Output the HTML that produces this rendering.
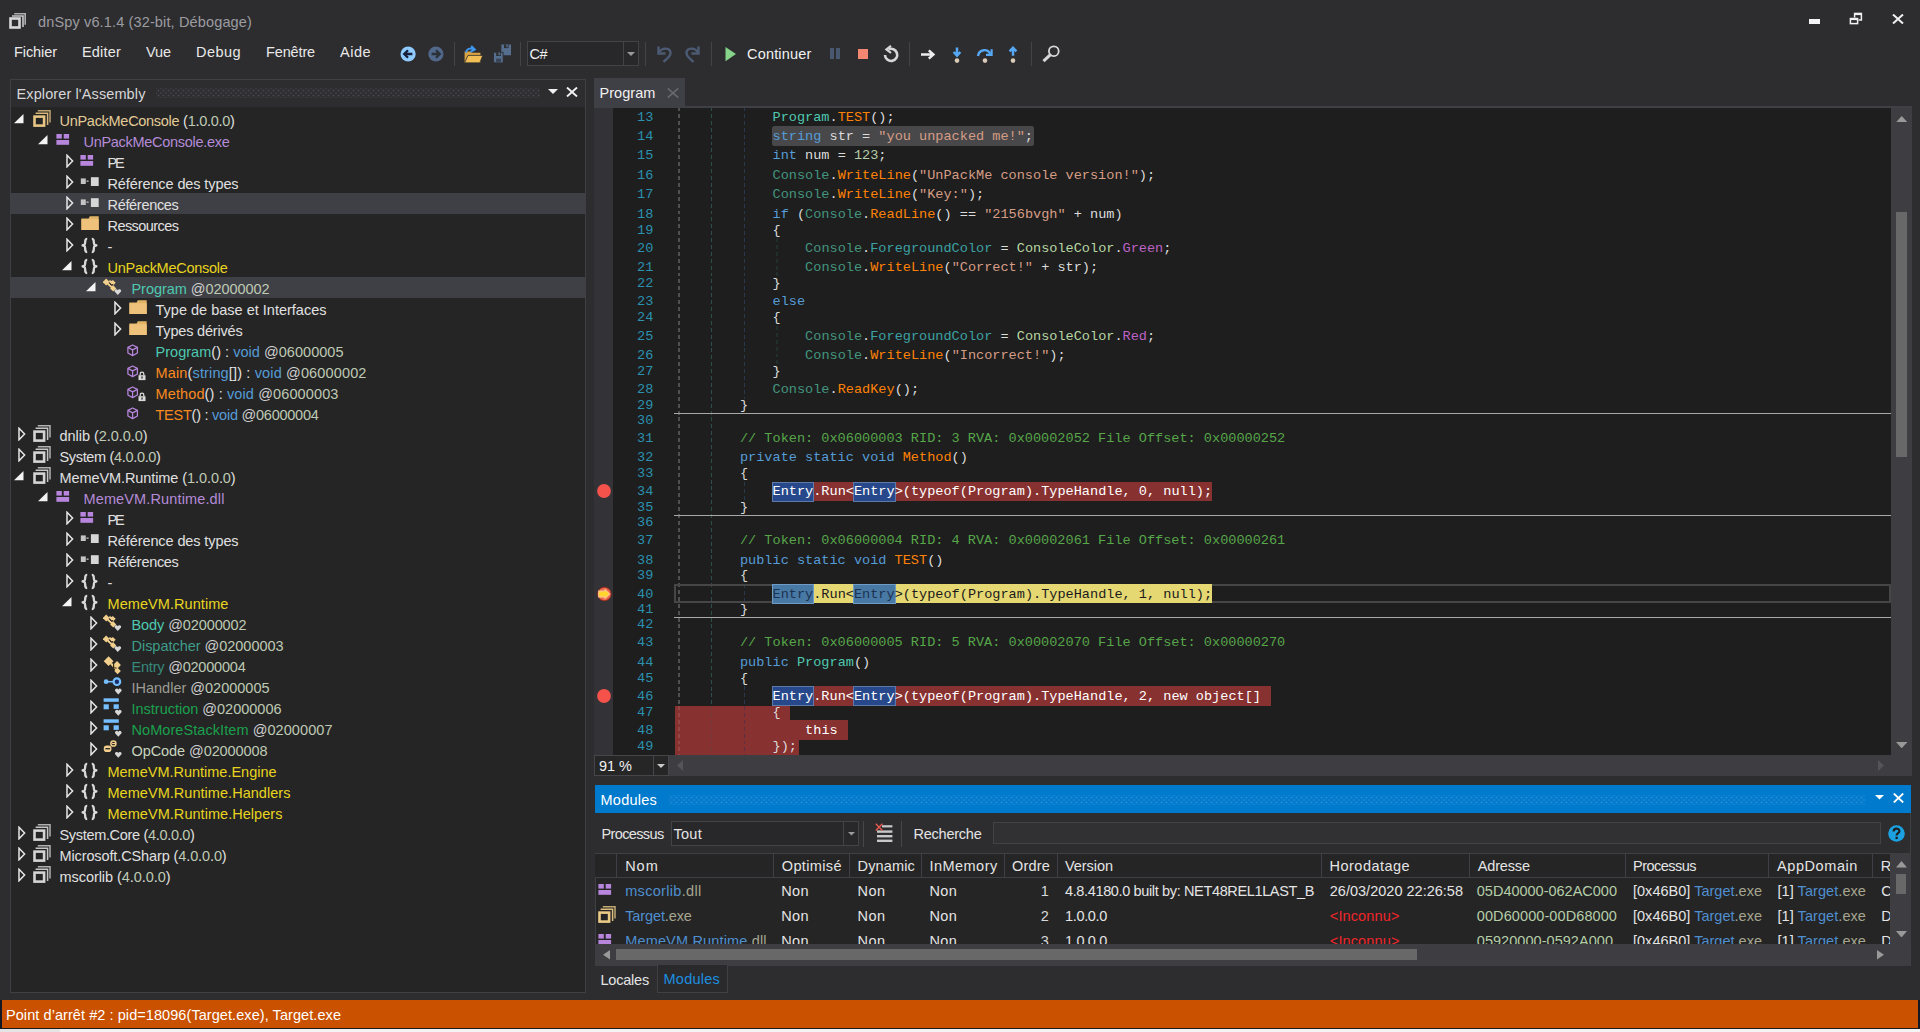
<!DOCTYPE html>
<html><head><meta charset="utf-8"><title>dnSpy</title><style>
html,body{margin:0;padding:0;}
body{width:1920px;height:1032px;overflow:hidden;background:#2D2D30;position:relative;font-family:"Liberation Sans",sans-serif;font-size:14.5px;color:#F1F1F1;}
.code{font-family:"Liberation Mono",monospace;font-size:13.575px;}
.ln{position:absolute;left:620px;width:33.4px;text-align:right;color:#2B91AF;white-space:pre;}
.cl{position:absolute;white-space:pre;}
.ref{background:#0E4583;box-shadow:0 0 0 1px #5A7BA8 inset;}
.refc{background:#3F74A6;box-shadow:0 0 0 1px #6E96BE inset;}
</style></head><body>
<svg style="position:absolute;left:9px;top:11px;" width="18.0" height="18.0" viewBox="0 0 18 18"><g fill="none" stroke="#D8D8DC" stroke-width="1.6"><path d="M5.2 2.8 H16.2 V13.8" opacity="0.75"/><path d="M3 5 H14 V16" opacity="0.9"/></g><rect x="1.5" y="7.5" width="9" height="9" fill="none" stroke="#D8D8DC" stroke-width="2.6"/></svg>
<div style="position:absolute;white-space:pre;left:38px;top:12px;height:20px;line-height:20px;letter-spacing:0.142px;color:#9C9CA0;">dnSpy v6.1.4 (32-bit, Débogage)</div>
<div style="position:absolute;left:1808.6px;top:19.4px;width:11.5px;height:4.6px;background:#F4F4F4;"></div>
<svg style="position:absolute;left:1849px;top:12.4px;" width="14" height="13" viewBox="0 0 14 13"><g fill="none" stroke="#F1F1F1"><path d="M5.6 5.4 V1.6 H12.4 V8 H9.6" stroke-width="1.5"/><path d="M5.6 2 H12.4" stroke-width="2.2"/><rect x="1.4" y="6.6" width="7.2" height="5" stroke-width="1.5"/><path d="M1.4 7 H8.6" stroke-width="2.2"/></g></svg>
<svg style="position:absolute;left:1892.2px;top:13.9px;" width="12" height="10" viewBox="0 0 12 10"><path d="M1 0.5 L11 9.5 M11 0.5 L1 9.5" stroke="#F1F1F1" stroke-width="2" fill="none"/></svg>
<div style="position:absolute;white-space:pre;left:14px;top:42px;height:20px;line-height:20px;letter-spacing:-0.073px;color:#E8E8E8;">Fichier</div>
<div style="position:absolute;white-space:pre;left:82px;top:42px;height:20px;line-height:20px;letter-spacing:0.187px;color:#E8E8E8;">Editer</div>
<div style="position:absolute;white-space:pre;left:146px;top:42px;height:20px;line-height:20px;letter-spacing:-0.088px;color:#E8E8E8;">Vue</div>
<div style="position:absolute;white-space:pre;left:196px;top:42px;height:20px;line-height:20px;letter-spacing:0.454px;color:#E8E8E8;">Debug</div>
<div style="position:absolute;white-space:pre;left:266px;top:42px;height:20px;line-height:20px;letter-spacing:-0.139px;color:#E8E8E8;">Fenêtre</div>
<div style="position:absolute;white-space:pre;left:340px;top:42px;height:20px;line-height:20px;letter-spacing:0.494px;color:#E8E8E8;">Aide</div>
<div style="position:absolute;left:454px;top:42px;width:1.3px;height:24px;background:#434348;"></div>
<div style="position:absolute;left:520px;top:42px;width:1.3px;height:24px;background:#434348;"></div>
<div style="position:absolute;left:645px;top:42px;width:1.3px;height:24px;background:#434348;"></div>
<div style="position:absolute;left:711px;top:42px;width:1.3px;height:24px;background:#434348;"></div>
<div style="position:absolute;left:909px;top:42px;width:1.3px;height:24px;background:#434348;"></div>
<div style="position:absolute;left:1031px;top:42px;width:1.3px;height:24px;background:#434348;"></div>
<svg style="position:absolute;left:399px;top:45px;" width="18" height="18" viewBox="0 0 18 18"><circle cx="9.1" cy="9" r="7.6" fill="#8FCBFF"/><path d="M13.4 9 H5.6 M9 5.2 L5.2 9 L9 12.8" stroke="#16203A" stroke-width="2.3" fill="none"/></svg>
<svg style="position:absolute;left:427px;top:45px;" width="18" height="18" viewBox="0 0 18 18"><circle cx="8.9" cy="9" r="7.6" fill="#52688A"/><path d="M4.6 9 H12.4 M9 5.2 L12.8 9 L9 12.8" stroke="#2A3038" stroke-width="2.3" fill="none"/></svg>
<svg style="position:absolute;left:463px;top:44px;" width="21" height="20" viewBox="0 0 21 20"><path d="M1.6 18.8 V7.4 H7.4 L8.8 8.8 H17.4 V18.8 Z" fill="#D9A441"/><path d="M1.6 18.8 L5 11.4 H19.8 L16.8 18.8 Z" fill="#F0BE55" stroke="#2D2D30" stroke-width="0.8"/><path d="M3 8.6 C3.4 4.6 7.4 3.6 10.6 5.4 M8.2 2 L11.8 5.6 L7.4 7.8" stroke="#3F97F0" stroke-width="1.9" fill="none"/></svg>
<svg style="position:absolute;left:492px;top:43px;" width="20" height="21" viewBox="0 0 20 21"><path d="M9.3 1.5 H19 V12.2 H10.6 L9.3 10.9 Z" fill="#566E8E"/><rect x="12" y="1.5" width="4.6" height="3.6" fill="#2D2D30"/><rect x="14.2" y="1.5" width="1.5" height="2.8" fill="#566E8E"/><path d="M1.5 9.3 H11.2 V19.9 H2.8 L1.5 18.6 Z" fill="#566E8E" stroke="#2D2D30" stroke-width="0.9"/><rect x="4.2" y="9.4" width="4.6" height="3.6" fill="#2D2D30"/><rect x="6.4" y="9.4" width="1.5" height="2.8" fill="#566E8E"/><rect x="4" y="15.6" width="5" height="4.2" fill="#3A4658"/></svg>
<div style="position:absolute;left:527px;top:41px;width:112px;height:25px;background:#28282B;box-sizing:border-box;border:1px solid #434346;"></div>
<div style="position:absolute;left:623px;top:42px;width:1px;height:23px;background:#434346;"></div>
<svg style="position:absolute;left:627px;top:52px;" width="8" height="4" viewBox="0 0 8 4"><path d="M0 0 H8 L4 4 Z" fill="#9A9A9E"/></svg>
<div style="position:absolute;white-space:pre;left:529.5px;top:44px;height:20px;line-height:20px;letter-spacing:-0.518px;color:#F1F1F1;">C#</div>
<svg style="position:absolute;left:655px;top:44px;" width="19" height="19" viewBox="0 0 19 19"><path d="M3.5 2.5 V9.5 H10.5" stroke="#4C5B73" stroke-width="2.4" fill="none"/><path d="M4 8.5 C7 3 15.5 3.5 15.5 9 C15.5 13 11 15 8.5 18" stroke="#4C5B73" stroke-width="2.4" fill="none"/></svg>
<svg style="position:absolute;left:683px;top:44px;" width="19" height="19" viewBox="0 0 19 19"><path d="M15.5 2.5 V9.5 H8.5" stroke="#4C5B73" stroke-width="2.4" fill="none"/><path d="M15 8.5 C12 3 3.5 3.5 3.5 9 C3.5 13 8 15 10.5 18" stroke="#4C5B73" stroke-width="2.4" fill="none"/></svg>
<svg style="position:absolute;left:725px;top:46px;" width="12" height="16" viewBox="0 0 12 16"><path d="M0.5 1 L11 8 L0.5 15.2 Z" fill="#86D48A"/></svg>
<div style="position:absolute;white-space:pre;left:747px;top:44px;height:20px;line-height:20px;letter-spacing:0.181px;color:#F1F1F1;">Continuer</div>
<div style="position:absolute;left:830.3px;top:47.6px;width:4.2px;height:11.4px;background:#485870;"></div>
<div style="position:absolute;left:835.9px;top:47.6px;width:4.2px;height:11.4px;background:#485870;"></div>
<div style="position:absolute;left:857.5px;top:48.5px;width:10.5px;height:10.5px;background:#F48771;"></div>
<svg style="position:absolute;left:882px;top:45px;" width="18" height="18" viewBox="0 0 18 18"><path d="M6.4 4.4 A6.1 6.1 0 1 1 3 10" stroke="#D6D6D6" stroke-width="2.6" fill="none"/><path d="M9 0.8 L4.4 4.4 L9 8" stroke="#D6D6D6" stroke-width="2.2" fill="none"/></svg>
<svg style="position:absolute;left:920px;top:49px;" width="16" height="11" viewBox="0 0 16 11"><path d="M1 5.5 H13 M8.8 1.4 L13.4 5.5 L8.8 9.6" stroke="#EDEDED" stroke-width="2.5" fill="none"/></svg>
<svg style="position:absolute;left:951px;top:46px;" width="12" height="18" viewBox="0 0 12 18"><path d="M6 1.6 V9 M2.6 6 L6 9.6 L9.4 6" stroke="#56A8F5" stroke-width="2.5" fill="none"/><circle cx="6" cy="14.6" r="2.3" fill="#D9CBB8"/></svg>
<svg style="position:absolute;left:976px;top:46px;" width="18" height="18" viewBox="0 0 18 18"><path d="M2 10 C3 3 12 2 14.5 8.5" stroke="#56A8F5" stroke-width="2.4" fill="none"/><path d="M10 8.8 H15.6 V3.2" stroke="#56A8F5" stroke-width="2.2" fill="none"/><circle cx="9" cy="14.6" r="2.3" fill="#D9CBB8"/></svg>
<svg style="position:absolute;left:1007px;top:46px;" width="12" height="18" viewBox="0 0 12 18"><path d="M6 9.8 V2.4 M2.6 5.4 L6 1.8 L9.4 5.4" stroke="#56A8F5" stroke-width="2.5" fill="none"/><circle cx="6" cy="14.6" r="2.3" fill="#D9CBB8"/></svg>
<svg style="position:absolute;left:1042px;top:45px;" width="19" height="18" viewBox="0 0 19 18"><circle cx="11.8" cy="6.2" r="4.9" stroke="#D8D8D8" stroke-width="1.8" fill="none"/><path d="M8.2 9.8 L1.5 16.2" stroke="#D8D8D8" stroke-width="3"/></svg>
<div style="position:absolute;left:10px;top:79px;width:576px;height:914px;background:#2D2D30;box-sizing:border-box;border:1px solid #3F3F46;"></div>
<div style="position:absolute;left:11px;top:107px;width:574px;height:885px;background:#252526;"></div>
<div style="position:absolute;white-space:pre;left:16.5px;top:84px;height:20px;line-height:20px;letter-spacing:0.112px;color:#D6D6D6;">Explorer l'Assembly</div>
<div style="position:absolute;left:156px;top:87.5px;width:384px;height:10px;background:transparent;background-image:radial-gradient(circle,#42424A 0.9px,transparent 1.15px),radial-gradient(circle,#42424A 0.9px,transparent 1.15px);background-size:5px 5px,5px 5px;background-position:0 0,2.5px 2.5px;"></div>
<svg style="position:absolute;left:548px;top:89px;" width="10" height="5" viewBox="0 0 10 5"><path d="M0 0 H10 L5 5 Z" fill="#F1F1F1"/></svg>
<svg style="position:absolute;left:566px;top:87px;" width="12" height="10" viewBox="0 0 12 10"><path d="M1 0.5 L11 9.5 M11 0.5 L1 9.5" stroke="#F1F1F1" stroke-width="1.9" fill="none"/></svg>
<svg style="position:absolute;left:13.899999999999999px;top:113.8px;" width="10" height="10" viewBox="0 0 10 10"><path d="M9.5 0 V9.2 H0 Z" fill="#F4F4F4"/></svg>
<svg style="position:absolute;left:30.5px;top:109px;" width="22" height="22" viewBox="0 0 22 22"><g fill="none" stroke="#E6C682" stroke-width="1.5"><path d="M6.8 1.8 H19 V13.6" opacity="0.8"/><path d="M4.6 4.2 H16.6 V16" opacity="0.92"/></g><rect x="3.5" y="7.6" width="9.6" height="9" fill="none" stroke="#E6C682" stroke-width="2.6"/></svg>
<div style="position:absolute;white-space:pre;left:59.5px;top:110.5px;height:21px;line-height:21px;letter-spacing:-0.286px"><span style="color:#E3CB97">UnPackMeConsole</span><span style="color:#E0E0E0"> (</span><span style="color:#BECAB3">1</span><span style="color:#E0E0E0">.</span><span style="color:#BECAB3">0</span><span style="color:#E0E0E0">.</span><span style="color:#BECAB3">0</span><span style="color:#E0E0E0">.</span><span style="color:#BECAB3">0</span><span style="color:#E0E0E0">)</span></div>
<svg style="position:absolute;left:37.9px;top:134.8px;" width="10" height="10" viewBox="0 0 10 10"><path d="M9.5 0 V9.2 H0 Z" fill="#F4F4F4"/></svg>
<svg style="position:absolute;left:54.5px;top:130px;" width="22" height="22" viewBox="0 0 22 22"><rect x="1.4" y="4" width="5.4" height="4.6" fill="#B785DC"/><rect x="8.7" y="4" width="5.4" height="4.6" fill="#B785DC"/><rect x="1.4" y="10" width="12.7" height="4.8" fill="#B785DC"/></svg>
<div style="position:absolute;white-space:pre;left:83.5px;top:131.5px;height:21px;line-height:21px;letter-spacing:-0.291px"><span style="color:#B48BD6">UnPackMeConsole.exe</span></div>
<svg style="position:absolute;left:66.0px;top:154px;" width="8" height="14" viewBox="0 0 8 14"><path d="M1 1.2 L6.6 7 L1 12.8 Z" fill="none" stroke="#E6E6E6" stroke-width="1.5" stroke-linejoin="miter"/></svg>
<svg style="position:absolute;left:78.5px;top:151px;" width="22" height="22" viewBox="0 0 22 22"><rect x="1.4" y="4" width="5.4" height="4.6" fill="#B785DC"/><rect x="8.7" y="4" width="5.4" height="4.6" fill="#B785DC"/><rect x="1.4" y="10" width="12.7" height="4.8" fill="#B785DC"/></svg>
<div style="position:absolute;white-space:pre;left:107.5px;top:152.5px;height:21px;line-height:21px;letter-spacing:-2.172px"><span style="color:#E0E0E0">PE</span></div>
<svg style="position:absolute;left:66.0px;top:175px;" width="8" height="14" viewBox="0 0 8 14"><path d="M1 1.2 L6.6 7 L1 12.8 Z" fill="none" stroke="#E6E6E6" stroke-width="1.5" stroke-linejoin="miter"/></svg>
<svg style="position:absolute;left:78.5px;top:172px;" width="22" height="22" viewBox="0 0 22 22"><rect x="1.8" y="6.4" width="5" height="5.6" fill="#C4C4C4"/><rect x="7.5" y="8.5" width="2.1" height="1.3" fill="#C4C4C4"/><rect x="11.9" y="5.2" width="7.8" height="8.8" fill="#D6D6D6"/></svg>
<div style="position:absolute;white-space:pre;left:107.5px;top:173.5px;height:21px;line-height:21px;letter-spacing:-0.105px"><span style="color:#E0E0E0">Référence des types</span></div>
<div style="position:absolute;left:11px;top:193px;width:574px;height:21px;background:#3F3F46;"></div>
<svg style="position:absolute;left:66.0px;top:196px;" width="8" height="14" viewBox="0 0 8 14"><path d="M1 1.2 L6.6 7 L1 12.8 Z" fill="none" stroke="#E6E6E6" stroke-width="1.5" stroke-linejoin="miter"/></svg>
<svg style="position:absolute;left:78.5px;top:193px;" width="22" height="22" viewBox="0 0 22 22"><rect x="1.8" y="6.4" width="5" height="5.6" fill="#C4C4C4"/><rect x="7.5" y="8.5" width="2.1" height="1.3" fill="#C4C4C4"/><rect x="11.9" y="5.2" width="7.8" height="8.8" fill="#D6D6D6"/></svg>
<div style="position:absolute;white-space:pre;left:107.5px;top:194.5px;height:21px;line-height:21px;letter-spacing:-0.315px"><span style="color:#E0E0E0">Références</span></div>
<svg style="position:absolute;left:66.0px;top:217px;" width="8" height="14" viewBox="0 0 8 14"><path d="M1 1.2 L6.6 7 L1 12.8 Z" fill="none" stroke="#E6E6E6" stroke-width="1.5" stroke-linejoin="miter"/></svg>
<svg style="position:absolute;left:78.5px;top:214px;" width="22" height="22" viewBox="0 0 22 22"><path d="M2.4 16 V4.4 H9.6 L10.8 2.2 H19.7 V16 Z" fill="#E2B467"/><path d="M2.4 16 V5.2 H19.7 V16 Z" fill="#EEC27A"/></svg>
<div style="position:absolute;white-space:pre;left:107.5px;top:215.5px;height:21px;line-height:21px;letter-spacing:-0.556px"><span style="color:#E0E0E0">Ressources</span></div>
<svg style="position:absolute;left:66.0px;top:238px;" width="8" height="14" viewBox="0 0 8 14"><path d="M1 1.2 L6.6 7 L1 12.8 Z" fill="none" stroke="#E6E6E6" stroke-width="1.5" stroke-linejoin="miter"/></svg>
<svg style="position:absolute;left:78.5px;top:235px;" width="22" height="22" viewBox="0 0 22 22"><g fill="none" stroke="#DADADA" stroke-width="2.3" stroke-linejoin="round"><path d="M8.2 3.8 C5.2 3.6 6.8 8.6 5.6 9.6 L3.6 10.4 L5.6 11.2 C6.8 12.2 5.2 17.2 8.2 17"/><path d="M12.8 3.8 C15.8 3.6 14.2 8.6 15.4 9.6 L17.4 10.4 L15.4 11.2 C14.2 12.2 15.8 17.2 12.8 17"/></g></svg>
<div style="position:absolute;white-space:pre;left:107.5px;top:236.5px;height:21px;line-height:21px;letter-spacing:-0.829px"><span style="color:#E0E0E0">-</span></div>
<svg style="position:absolute;left:61.9px;top:260.8px;" width="10" height="10" viewBox="0 0 10 10"><path d="M9.5 0 V9.2 H0 Z" fill="#F4F4F4"/></svg>
<svg style="position:absolute;left:78.5px;top:256px;" width="22" height="22" viewBox="0 0 22 22"><g fill="none" stroke="#DADADA" stroke-width="2.3" stroke-linejoin="round"><path d="M8.2 3.8 C5.2 3.6 6.8 8.6 5.6 9.6 L3.6 10.4 L5.6 11.2 C6.8 12.2 5.2 17.2 8.2 17"/><path d="M12.8 3.8 C15.8 3.6 14.2 8.6 15.4 9.6 L17.4 10.4 L15.4 11.2 C14.2 12.2 15.8 17.2 12.8 17"/></g></svg>
<div style="position:absolute;white-space:pre;left:107.5px;top:257.5px;height:21px;line-height:21px;letter-spacing:-0.275px"><span style="color:#E8D41E">UnPackMeConsole</span></div>
<div style="position:absolute;left:11px;top:277px;width:574px;height:21px;background:#3F3F46;"></div>
<svg style="position:absolute;left:85.9px;top:281.8px;" width="10" height="10" viewBox="0 0 10 10"><path d="M9.5 0 V9.2 H0 Z" fill="#F4F4F4"/></svg>
<svg style="position:absolute;left:102.5px;top:277px;" width="22" height="22" viewBox="0 0 22 22"><path d="M-0.19999999999999973 5 L3.2 1.6 L6.6 5 L3.2 8.4 Z" fill="#F2CF8C"/><path d="M6.9 5.8 L9.8 2.9 L12.700000000000001 5.8 L9.8 8.7 Z" fill="#F2CF8C"/><path d="M7.1 11.4 L10.2 8.3 L13.299999999999999 11.4 L10.2 14.5 Z" fill="#F2CF8C"/><path d="M3.2 5 L10.2 11.4 M6.2 4 L9.8 5.8" stroke="#F2CF8C" stroke-width="2.2" fill="none"/><path d="M6.4 5.6 L8 8.2 L10.2 7.4" stroke="#252526" stroke-width="1" fill="none"/><path d="M14.8 18.1 L11.600000000000001 14.6 A1.7 1.7 0 0 1 14.8 13.3 A1.7 1.7 0 0 1 18.0 14.6 Z" fill="#D8D8D8"/></svg>
<div style="position:absolute;white-space:pre;left:131.5px;top:278.5px;height:21px;line-height:21px;letter-spacing:-0.051px"><span style="color:#4EC9B0">Program</span><span style="color:#E0E0E0"> </span><span style="color:#D0D0D0">@</span><span style="color:#BECAB3">02000002</span></div>
<svg style="position:absolute;left:114.0px;top:301px;" width="8" height="14" viewBox="0 0 8 14"><path d="M1 1.2 L6.6 7 L1 12.8 Z" fill="none" stroke="#E6E6E6" stroke-width="1.5" stroke-linejoin="miter"/></svg>
<svg style="position:absolute;left:126.5px;top:298px;" width="22" height="22" viewBox="0 0 22 22"><path d="M2.4 16 V4.4 H9.6 L10.8 2.2 H19.7 V16 Z" fill="#E2B467"/><path d="M2.4 16 V5.2 H19.7 V16 Z" fill="#EEC27A"/></svg>
<div style="position:absolute;white-space:pre;left:155.5px;top:299.5px;height:21px;line-height:21px;letter-spacing:0.004px"><span style="color:#E0E0E0">Type de base et Interfaces</span></div>
<svg style="position:absolute;left:114.0px;top:322px;" width="8" height="14" viewBox="0 0 8 14"><path d="M1 1.2 L6.6 7 L1 12.8 Z" fill="none" stroke="#E6E6E6" stroke-width="1.5" stroke-linejoin="miter"/></svg>
<svg style="position:absolute;left:126.5px;top:319px;" width="22" height="22" viewBox="0 0 22 22"><path d="M2.4 16 V4.4 H9.6 L10.8 2.2 H19.7 V16 Z" fill="#E2B467"/><path d="M2.4 16 V5.2 H19.7 V16 Z" fill="#EEC27A"/></svg>
<div style="position:absolute;white-space:pre;left:155.5px;top:320.5px;height:21px;line-height:21px;letter-spacing:-0.189px"><span style="color:#E0E0E0">Types dérivés</span></div>
<svg style="position:absolute;left:126.5px;top:340px;" width="22" height="22" viewBox="0 0 22 22"><g fill="none" stroke="#B785DC" stroke-width="1.25" stroke-linejoin="round"><path d="M5.6 5 L10.4 7.4 V13 L5.6 15.6 L0.9 13 V7.4 Z"/><path d="M0.9 7.4 L5.6 9.9 L10.4 7.4 M5.6 9.9 V15.6"/></g></svg>
<div style="position:absolute;white-space:pre;left:155.5px;top:341.5px;height:21px;line-height:21px;letter-spacing:0.03px"><span style="color:#4EC9B0">Program</span><span style="color:#E0E0E0">() : </span><span style="color:#569CD6">void</span><span style="color:#E0E0E0"> </span><span style="color:#D0D0D0">@</span><span style="color:#BECAB3">06000005</span></div>
<svg style="position:absolute;left:126.5px;top:361px;" width="22" height="22" viewBox="0 0 22 22"><g fill="none" stroke="#B785DC" stroke-width="1.25" stroke-linejoin="round"><path d="M5.6 5 L10.4 7.4 V13 L5.6 15.6 L0.9 13 V7.4 Z"/><path d="M0.9 7.4 L5.6 9.9 L10.4 7.4 M5.6 9.9 V15.6"/></g><rect x="11.5" y="14.2" width="7" height="4.9" fill="#DADADA"/><path d="M13.2 14.2 V12.9 A1.8 1.8 0 0 1 16.8 12.9 V14.2" stroke="#DADADA" stroke-width="1.3" fill="none"/><rect x="14.4" y="15.4" width="1.2" height="2.2" fill="#252526"/></svg>
<div style="position:absolute;white-space:pre;left:155.5px;top:362.5px;height:21px;line-height:21px;letter-spacing:0.143px"><span style="color:#F98A1E">Main</span><span style="color:#E0E0E0">(</span><span style="color:#569CD6">string</span><span style="color:#E0E0E0">[]) : </span><span style="color:#569CD6">void</span><span style="color:#E0E0E0"> </span><span style="color:#D0D0D0">@</span><span style="color:#BECAB3">06000002</span></div>
<svg style="position:absolute;left:126.5px;top:382px;" width="22" height="22" viewBox="0 0 22 22"><g fill="none" stroke="#B785DC" stroke-width="1.25" stroke-linejoin="round"><path d="M5.6 5 L10.4 7.4 V13 L5.6 15.6 L0.9 13 V7.4 Z"/><path d="M0.9 7.4 L5.6 9.9 L10.4 7.4 M5.6 9.9 V15.6"/></g><rect x="11.5" y="14.2" width="7" height="4.9" fill="#DADADA"/><path d="M13.2 14.2 V12.9 A1.8 1.8 0 0 1 16.8 12.9 V14.2" stroke="#DADADA" stroke-width="1.3" fill="none"/><rect x="14.4" y="15.4" width="1.2" height="2.2" fill="#252526"/></svg>
<div style="position:absolute;white-space:pre;left:155.5px;top:383.5px;height:21px;line-height:21px;letter-spacing:0.121px"><span style="color:#F98A1E">Method</span><span style="color:#E0E0E0">() : </span><span style="color:#569CD6">void</span><span style="color:#E0E0E0"> </span><span style="color:#D0D0D0">@</span><span style="color:#BECAB3">06000003</span></div>
<svg style="position:absolute;left:126.5px;top:403px;" width="22" height="22" viewBox="0 0 22 22"><g fill="none" stroke="#B785DC" stroke-width="1.25" stroke-linejoin="round"><path d="M5.6 5 L10.4 7.4 V13 L5.6 15.6 L0.9 13 V7.4 Z"/><path d="M0.9 7.4 L5.6 9.9 L10.4 7.4 M5.6 9.9 V15.6"/></g></svg>
<div style="position:absolute;white-space:pre;left:155.5px;top:404.5px;height:21px;line-height:21px;letter-spacing:-0.246px"><span style="color:#F98A1E">TEST</span><span style="color:#E0E0E0">() : </span><span style="color:#569CD6">void</span><span style="color:#E0E0E0"> </span><span style="color:#D0D0D0">@</span><span style="color:#BECAB3">06000004</span></div>
<svg style="position:absolute;left:18.0px;top:427px;" width="8" height="14" viewBox="0 0 8 14"><path d="M1 1.2 L6.6 7 L1 12.8 Z" fill="none" stroke="#E6E6E6" stroke-width="1.5" stroke-linejoin="miter"/></svg>
<svg style="position:absolute;left:30.5px;top:424px;" width="22" height="22" viewBox="0 0 22 22"><g fill="none" stroke="#D4D4D4" stroke-width="1.5"><path d="M6.8 1.8 H19 V13.6" opacity="0.8"/><path d="M4.6 4.2 H16.6 V16" opacity="0.92"/></g><rect x="3.5" y="7.6" width="9.6" height="9" fill="none" stroke="#D4D4D4" stroke-width="2.6"/></svg>
<div style="position:absolute;white-space:pre;left:59.5px;top:425.5px;height:21px;line-height:21px;letter-spacing:-0.044px"><span style="color:#E0E0E0">dnlib</span><span style="color:#E0E0E0"> (</span><span style="color:#BECAB3">2</span><span style="color:#E0E0E0">.</span><span style="color:#BECAB3">0</span><span style="color:#E0E0E0">.</span><span style="color:#BECAB3">0</span><span style="color:#E0E0E0">.</span><span style="color:#BECAB3">0</span><span style="color:#E0E0E0">)</span></div>
<svg style="position:absolute;left:18.0px;top:448px;" width="8" height="14" viewBox="0 0 8 14"><path d="M1 1.2 L6.6 7 L1 12.8 Z" fill="none" stroke="#E6E6E6" stroke-width="1.5" stroke-linejoin="miter"/></svg>
<svg style="position:absolute;left:30.5px;top:445px;" width="22" height="22" viewBox="0 0 22 22"><g fill="none" stroke="#D4D4D4" stroke-width="1.5"><path d="M6.8 1.8 H19 V13.6" opacity="0.8"/><path d="M4.6 4.2 H16.6 V16" opacity="0.92"/></g><rect x="3.5" y="7.6" width="9.6" height="9" fill="none" stroke="#D4D4D4" stroke-width="2.6"/></svg>
<div style="position:absolute;white-space:pre;left:59.5px;top:446.5px;height:21px;line-height:21px;letter-spacing:-0.336px"><span style="color:#E0E0E0">System</span><span style="color:#E0E0E0"> (</span><span style="color:#BECAB3">4</span><span style="color:#E0E0E0">.</span><span style="color:#BECAB3">0</span><span style="color:#E0E0E0">.</span><span style="color:#BECAB3">0</span><span style="color:#E0E0E0">.</span><span style="color:#BECAB3">0</span><span style="color:#E0E0E0">)</span></div>
<svg style="position:absolute;left:13.899999999999999px;top:470.8px;" width="10" height="10" viewBox="0 0 10 10"><path d="M9.5 0 V9.2 H0 Z" fill="#F4F4F4"/></svg>
<svg style="position:absolute;left:30.5px;top:466px;" width="22" height="22" viewBox="0 0 22 22"><g fill="none" stroke="#D4D4D4" stroke-width="1.5"><path d="M6.8 1.8 H19 V13.6" opacity="0.8"/><path d="M4.6 4.2 H16.6 V16" opacity="0.92"/></g><rect x="3.5" y="7.6" width="9.6" height="9" fill="none" stroke="#D4D4D4" stroke-width="2.6"/></svg>
<div style="position:absolute;white-space:pre;left:59.5px;top:467.5px;height:21px;line-height:21px;letter-spacing:-0.087px"><span style="color:#E0E0E0">MemeVM.Runtime</span><span style="color:#E0E0E0"> (</span><span style="color:#BECAB3">1</span><span style="color:#E0E0E0">.</span><span style="color:#BECAB3">0</span><span style="color:#E0E0E0">.</span><span style="color:#BECAB3">0</span><span style="color:#E0E0E0">.</span><span style="color:#BECAB3">0</span><span style="color:#E0E0E0">)</span></div>
<svg style="position:absolute;left:37.9px;top:491.8px;" width="10" height="10" viewBox="0 0 10 10"><path d="M9.5 0 V9.2 H0 Z" fill="#F4F4F4"/></svg>
<svg style="position:absolute;left:54.5px;top:487px;" width="22" height="22" viewBox="0 0 22 22"><rect x="1.4" y="4" width="5.4" height="4.6" fill="#B785DC"/><rect x="8.7" y="4" width="5.4" height="4.6" fill="#B785DC"/><rect x="1.4" y="10" width="12.7" height="4.8" fill="#B785DC"/></svg>
<div style="position:absolute;white-space:pre;left:83.5px;top:488.5px;height:21px;line-height:21px;letter-spacing:0.133px"><span style="color:#B48BD6">MemeVM.Runtime.dll</span></div>
<svg style="position:absolute;left:66.0px;top:511px;" width="8" height="14" viewBox="0 0 8 14"><path d="M1 1.2 L6.6 7 L1 12.8 Z" fill="none" stroke="#E6E6E6" stroke-width="1.5" stroke-linejoin="miter"/></svg>
<svg style="position:absolute;left:78.5px;top:508px;" width="22" height="22" viewBox="0 0 22 22"><rect x="1.4" y="4" width="5.4" height="4.6" fill="#B785DC"/><rect x="8.7" y="4" width="5.4" height="4.6" fill="#B785DC"/><rect x="1.4" y="10" width="12.7" height="4.8" fill="#B785DC"/></svg>
<div style="position:absolute;white-space:pre;left:107.5px;top:509.5px;height:21px;line-height:21px;letter-spacing:-2.172px"><span style="color:#E0E0E0">PE</span></div>
<svg style="position:absolute;left:66.0px;top:532px;" width="8" height="14" viewBox="0 0 8 14"><path d="M1 1.2 L6.6 7 L1 12.8 Z" fill="none" stroke="#E6E6E6" stroke-width="1.5" stroke-linejoin="miter"/></svg>
<svg style="position:absolute;left:78.5px;top:529px;" width="22" height="22" viewBox="0 0 22 22"><rect x="1.8" y="6.4" width="5" height="5.6" fill="#C4C4C4"/><rect x="7.5" y="8.5" width="2.1" height="1.3" fill="#C4C4C4"/><rect x="11.9" y="5.2" width="7.8" height="8.8" fill="#D6D6D6"/></svg>
<div style="position:absolute;white-space:pre;left:107.5px;top:530.5px;height:21px;line-height:21px;letter-spacing:-0.105px"><span style="color:#E0E0E0">Référence des types</span></div>
<svg style="position:absolute;left:66.0px;top:553px;" width="8" height="14" viewBox="0 0 8 14"><path d="M1 1.2 L6.6 7 L1 12.8 Z" fill="none" stroke="#E6E6E6" stroke-width="1.5" stroke-linejoin="miter"/></svg>
<svg style="position:absolute;left:78.5px;top:550px;" width="22" height="22" viewBox="0 0 22 22"><rect x="1.8" y="6.4" width="5" height="5.6" fill="#C4C4C4"/><rect x="7.5" y="8.5" width="2.1" height="1.3" fill="#C4C4C4"/><rect x="11.9" y="5.2" width="7.8" height="8.8" fill="#D6D6D6"/></svg>
<div style="position:absolute;white-space:pre;left:107.5px;top:551.5px;height:21px;line-height:21px;letter-spacing:-0.315px"><span style="color:#E0E0E0">Références</span></div>
<svg style="position:absolute;left:66.0px;top:574px;" width="8" height="14" viewBox="0 0 8 14"><path d="M1 1.2 L6.6 7 L1 12.8 Z" fill="none" stroke="#E6E6E6" stroke-width="1.5" stroke-linejoin="miter"/></svg>
<svg style="position:absolute;left:78.5px;top:571px;" width="22" height="22" viewBox="0 0 22 22"><g fill="none" stroke="#DADADA" stroke-width="2.3" stroke-linejoin="round"><path d="M8.2 3.8 C5.2 3.6 6.8 8.6 5.6 9.6 L3.6 10.4 L5.6 11.2 C6.8 12.2 5.2 17.2 8.2 17"/><path d="M12.8 3.8 C15.8 3.6 14.2 8.6 15.4 9.6 L17.4 10.4 L15.4 11.2 C14.2 12.2 15.8 17.2 12.8 17"/></g></svg>
<div style="position:absolute;white-space:pre;left:107.5px;top:572.5px;height:21px;line-height:21px;letter-spacing:-0.829px"><span style="color:#E0E0E0">-</span></div>
<svg style="position:absolute;left:61.9px;top:596.8px;" width="10" height="10" viewBox="0 0 10 10"><path d="M9.5 0 V9.2 H0 Z" fill="#F4F4F4"/></svg>
<svg style="position:absolute;left:78.5px;top:592px;" width="22" height="22" viewBox="0 0 22 22"><g fill="none" stroke="#DADADA" stroke-width="2.3" stroke-linejoin="round"><path d="M8.2 3.8 C5.2 3.6 6.8 8.6 5.6 9.6 L3.6 10.4 L5.6 11.2 C6.8 12.2 5.2 17.2 8.2 17"/><path d="M12.8 3.8 C15.8 3.6 14.2 8.6 15.4 9.6 L17.4 10.4 L15.4 11.2 C14.2 12.2 15.8 17.2 12.8 17"/></g></svg>
<div style="position:absolute;white-space:pre;left:107.5px;top:593.5px;height:21px;line-height:21px;letter-spacing:0.067px"><span style="color:#E8D41E">MemeVM.Runtime</span></div>
<svg style="position:absolute;left:90.0px;top:616px;" width="8" height="14" viewBox="0 0 8 14"><path d="M1 1.2 L6.6 7 L1 12.8 Z" fill="none" stroke="#E6E6E6" stroke-width="1.5" stroke-linejoin="miter"/></svg>
<svg style="position:absolute;left:102.5px;top:613px;" width="22" height="22" viewBox="0 0 22 22"><path d="M-0.19999999999999973 5 L3.2 1.6 L6.6 5 L3.2 8.4 Z" fill="#F2CF8C"/><path d="M6.9 5.8 L9.8 2.9 L12.700000000000001 5.8 L9.8 8.7 Z" fill="#F2CF8C"/><path d="M7.1 11.4 L10.2 8.3 L13.299999999999999 11.4 L10.2 14.5 Z" fill="#F2CF8C"/><path d="M3.2 5 L10.2 11.4 M6.2 4 L9.8 5.8" stroke="#F2CF8C" stroke-width="2.2" fill="none"/><path d="M6.4 5.6 L8 8.2 L10.2 7.4" stroke="#252526" stroke-width="1" fill="none"/><path d="M14.8 18.1 L11.600000000000001 14.6 A1.7 1.7 0 0 1 14.8 13.3 A1.7 1.7 0 0 1 18.0 14.6 Z" fill="#D8D8D8"/></svg>
<div style="position:absolute;white-space:pre;left:131.5px;top:614.5px;height:21px;line-height:21px;letter-spacing:-0.094px"><span style="color:#4EC9B0">Body</span><span style="color:#E0E0E0"> </span><span style="color:#D0D0D0">@</span><span style="color:#BECAB3">02000002</span></div>
<svg style="position:absolute;left:90.0px;top:637px;" width="8" height="14" viewBox="0 0 8 14"><path d="M1 1.2 L6.6 7 L1 12.8 Z" fill="none" stroke="#E6E6E6" stroke-width="1.5" stroke-linejoin="miter"/></svg>
<svg style="position:absolute;left:102.5px;top:634px;" width="22" height="22" viewBox="0 0 22 22"><path d="M-0.19999999999999973 5 L3.2 1.6 L6.6 5 L3.2 8.4 Z" fill="#F2CF8C"/><path d="M6.9 5.8 L9.8 2.9 L12.700000000000001 5.8 L9.8 8.7 Z" fill="#F2CF8C"/><path d="M7.1 11.4 L10.2 8.3 L13.299999999999999 11.4 L10.2 14.5 Z" fill="#F2CF8C"/><path d="M3.2 5 L10.2 11.4 M6.2 4 L9.8 5.8" stroke="#F2CF8C" stroke-width="2.2" fill="none"/><path d="M6.4 5.6 L8 8.2 L10.2 7.4" stroke="#252526" stroke-width="1" fill="none"/><path d="M14.8 18.1 L11.600000000000001 14.6 A1.7 1.7 0 0 1 14.8 13.3 A1.7 1.7 0 0 1 18.0 14.6 Z" fill="#D8D8D8"/></svg>
<div style="position:absolute;white-space:pre;left:131.5px;top:635.5px;height:21px;line-height:21px;letter-spacing:-0.029px"><span style="color:#3F9C88">Dispatcher</span><span style="color:#E0E0E0"> </span><span style="color:#D0D0D0">@</span><span style="color:#BECAB3">02000003</span></div>
<svg style="position:absolute;left:90.0px;top:658px;" width="8" height="14" viewBox="0 0 8 14"><path d="M1 1.2 L6.6 7 L1 12.8 Z" fill="none" stroke="#E6E6E6" stroke-width="1.5" stroke-linejoin="miter"/></svg>
<svg style="position:absolute;left:102.5px;top:655px;" width="22" height="22" viewBox="0 0 22 22"><path d="M0.6999999999999993 6.2 L5.6 1.2999999999999998 L10.5 6.2 L5.6 11.100000000000001 Z" fill="#F2CF8C"/><path d="M10.1 10 L14 6.1 L17.9 10 L14 13.9 Z" fill="#F2CF8C"/><path d="M11.399999999999999 16 L14.6 12.8 L17.8 16 L14.6 19.2 Z" fill="#F2CF8C"/><path d="M8 8.4 L14.6 16" stroke="#F2CF8C" stroke-width="2.2"/><path d="M10.6 9 V13 H13.6" stroke="#3A2A10" stroke-width="1.2" fill="none"/></svg>
<div style="position:absolute;white-space:pre;left:131.5px;top:656.5px;height:21px;line-height:21px;letter-spacing:-0.207px"><span style="color:#37897A">Entry</span><span style="color:#E0E0E0"> </span><span style="color:#D0D0D0">@</span><span style="color:#BECAB3">02000004</span></div>
<svg style="position:absolute;left:90.0px;top:679px;" width="8" height="14" viewBox="0 0 8 14"><path d="M1 1.2 L6.6 7 L1 12.8 Z" fill="none" stroke="#E6E6E6" stroke-width="1.5" stroke-linejoin="miter"/></svg>
<svg style="position:absolute;left:102.5px;top:676px;" width="22" height="22" viewBox="0 0 22 22"><circle cx="3.1" cy="5.7" r="2.4" fill="#75BEFF"/><path d="M4 5.7 H10" stroke="#75BEFF" stroke-width="1.5"/><circle cx="13.9" cy="5.7" r="3.3" fill="#1B2C66" stroke="#75BEFF" stroke-width="2.2"/><path d="M15.3 18.5 L12.100000000000001 15.0 A1.7 1.7 0 0 1 15.3 13.700000000000001 A1.7 1.7 0 0 1 18.5 15.0 Z" fill="#D8D8D8"/></svg>
<div style="position:absolute;white-space:pre;left:131.5px;top:677.5px;height:21px;line-height:21px;letter-spacing:-0.004px"><span style="color:#9C9C92">IHandler</span><span style="color:#E0E0E0"> </span><span style="color:#D0D0D0">@</span><span style="color:#BECAB3">02000005</span></div>
<svg style="position:absolute;left:90.0px;top:700px;" width="8" height="14" viewBox="0 0 8 14"><path d="M1 1.2 L6.6 7 L1 12.8 Z" fill="none" stroke="#E6E6E6" stroke-width="1.5" stroke-linejoin="miter"/></svg>
<svg style="position:absolute;left:102.5px;top:697px;" width="22" height="22" viewBox="0 0 22 22"><rect x="0.6" y="1.3" width="15.2" height="3.5" fill="#75BEFF"/><rect x="0.6" y="7.3" width="5.2" height="5" fill="#75BEFF"/><rect x="10.6" y="7.3" width="5.2" height="4.6" fill="#75BEFF"/><path d="M15.3 18.8 L12.100000000000001 15.299999999999999 A1.7 1.7 0 0 1 15.3 14.0 A1.7 1.7 0 0 1 18.5 15.299999999999999 Z" fill="#D8D8D8"/></svg>
<div style="position:absolute;white-space:pre;left:131.5px;top:698.5px;height:21px;line-height:21px;letter-spacing:-0.008px"><span style="color:#1BA04C">Instruction</span><span style="color:#E0E0E0"> </span><span style="color:#D0D0D0">@</span><span style="color:#BECAB3">02000006</span></div>
<svg style="position:absolute;left:90.0px;top:721px;" width="8" height="14" viewBox="0 0 8 14"><path d="M1 1.2 L6.6 7 L1 12.8 Z" fill="none" stroke="#E6E6E6" stroke-width="1.5" stroke-linejoin="miter"/></svg>
<svg style="position:absolute;left:102.5px;top:718px;" width="22" height="22" viewBox="0 0 22 22"><rect x="0.6" y="1.3" width="15.2" height="3.5" fill="#75BEFF"/><rect x="0.6" y="7.3" width="5.2" height="5" fill="#75BEFF"/><rect x="10.6" y="7.3" width="5.2" height="4.6" fill="#75BEFF"/><path d="M15.3 18.8 L12.100000000000001 15.299999999999999 A1.7 1.7 0 0 1 15.3 14.0 A1.7 1.7 0 0 1 18.5 15.299999999999999 Z" fill="#D8D8D8"/></svg>
<div style="position:absolute;white-space:pre;left:131.5px;top:719.5px;height:21px;line-height:21px;letter-spacing:0.068px"><span style="color:#1BA04C">NoMoreStackItem</span><span style="color:#E0E0E0"> </span><span style="color:#D0D0D0">@</span><span style="color:#BECAB3">02000007</span></div>
<svg style="position:absolute;left:90.0px;top:742px;" width="8" height="14" viewBox="0 0 8 14"><path d="M1 1.2 L6.6 7 L1 12.8 Z" fill="none" stroke="#E6E6E6" stroke-width="1.5" stroke-linejoin="miter"/></svg>
<svg style="position:absolute;left:102.5px;top:739px;" width="22" height="22" viewBox="0 0 22 22"><rect x="7.9" y="1.9" width="5" height="5.2" rx="2.4" fill="none" stroke="#F2CF8C" stroke-width="1.5"/><path d="M9 4.5 H13" stroke="#F2CF8C" stroke-width="1.2"/><rect x="0.8" y="6.4" width="7.6" height="6.7" rx="2.8" fill="#F2CF8C"/><path d="M2.4 9.7 H7" stroke="#252526" stroke-width="1.3"/><path d="M15.3 18.85 L12.100000000000001 15.35 A1.7 1.7 0 0 1 15.3 14.05 A1.7 1.7 0 0 1 18.5 15.35 Z" fill="#D8D8D8"/></svg>
<div style="position:absolute;white-space:pre;left:131.5px;top:740.5px;height:21px;line-height:21px;letter-spacing:-0.079px"><span style="color:#C9D4BF">OpCode</span><span style="color:#E0E0E0"> </span><span style="color:#D0D0D0">@</span><span style="color:#BECAB3">02000008</span></div>
<svg style="position:absolute;left:66.0px;top:763px;" width="8" height="14" viewBox="0 0 8 14"><path d="M1 1.2 L6.6 7 L1 12.8 Z" fill="none" stroke="#E6E6E6" stroke-width="1.5" stroke-linejoin="miter"/></svg>
<svg style="position:absolute;left:78.5px;top:760px;" width="22" height="22" viewBox="0 0 22 22"><g fill="none" stroke="#DADADA" stroke-width="2.3" stroke-linejoin="round"><path d="M8.2 3.8 C5.2 3.6 6.8 8.6 5.6 9.6 L3.6 10.4 L5.6 11.2 C6.8 12.2 5.2 17.2 8.2 17"/><path d="M12.8 3.8 C15.8 3.6 14.2 8.6 15.4 9.6 L17.4 10.4 L15.4 11.2 C14.2 12.2 15.8 17.2 12.8 17"/></g></svg>
<div style="position:absolute;white-space:pre;left:107.5px;top:761.5px;height:21px;line-height:21px;letter-spacing:-0.011px"><span style="color:#E8D41E">MemeVM.Runtime.Engine</span></div>
<svg style="position:absolute;left:66.0px;top:784px;" width="8" height="14" viewBox="0 0 8 14"><path d="M1 1.2 L6.6 7 L1 12.8 Z" fill="none" stroke="#E6E6E6" stroke-width="1.5" stroke-linejoin="miter"/></svg>
<svg style="position:absolute;left:78.5px;top:781px;" width="22" height="22" viewBox="0 0 22 22"><g fill="none" stroke="#DADADA" stroke-width="2.3" stroke-linejoin="round"><path d="M8.2 3.8 C5.2 3.6 6.8 8.6 5.6 9.6 L3.6 10.4 L5.6 11.2 C6.8 12.2 5.2 17.2 8.2 17"/><path d="M12.8 3.8 C15.8 3.6 14.2 8.6 15.4 9.6 L17.4 10.4 L15.4 11.2 C14.2 12.2 15.8 17.2 12.8 17"/></g></svg>
<div style="position:absolute;white-space:pre;left:107.5px;top:782.5px;height:21px;line-height:21px;letter-spacing:0.038px"><span style="color:#E8D41E">MemeVM.Runtime.Handlers</span></div>
<svg style="position:absolute;left:66.0px;top:805px;" width="8" height="14" viewBox="0 0 8 14"><path d="M1 1.2 L6.6 7 L1 12.8 Z" fill="none" stroke="#E6E6E6" stroke-width="1.5" stroke-linejoin="miter"/></svg>
<svg style="position:absolute;left:78.5px;top:802px;" width="22" height="22" viewBox="0 0 22 22"><g fill="none" stroke="#DADADA" stroke-width="2.3" stroke-linejoin="round"><path d="M8.2 3.8 C5.2 3.6 6.8 8.6 5.6 9.6 L3.6 10.4 L5.6 11.2 C6.8 12.2 5.2 17.2 8.2 17"/><path d="M12.8 3.8 C15.8 3.6 14.2 8.6 15.4 9.6 L17.4 10.4 L15.4 11.2 C14.2 12.2 15.8 17.2 12.8 17"/></g></svg>
<div style="position:absolute;white-space:pre;left:107.5px;top:803.5px;height:21px;line-height:21px;letter-spacing:0.043px"><span style="color:#E8D41E">MemeVM.Runtime.Helpers</span></div>
<svg style="position:absolute;left:18.0px;top:826px;" width="8" height="14" viewBox="0 0 8 14"><path d="M1 1.2 L6.6 7 L1 12.8 Z" fill="none" stroke="#E6E6E6" stroke-width="1.5" stroke-linejoin="miter"/></svg>
<svg style="position:absolute;left:30.5px;top:823px;" width="22" height="22" viewBox="0 0 22 22"><g fill="none" stroke="#D4D4D4" stroke-width="1.5"><path d="M6.8 1.8 H19 V13.6" opacity="0.8"/><path d="M4.6 4.2 H16.6 V16" opacity="0.92"/></g><rect x="3.5" y="7.6" width="9.6" height="9" fill="none" stroke="#D4D4D4" stroke-width="2.6"/></svg>
<div style="position:absolute;white-space:pre;left:59.5px;top:824.5px;height:21px;line-height:21px;letter-spacing:-0.325px"><span style="color:#E0E0E0">System.Core</span><span style="color:#E0E0E0"> (</span><span style="color:#BECAB3">4</span><span style="color:#E0E0E0">.</span><span style="color:#BECAB3">0</span><span style="color:#E0E0E0">.</span><span style="color:#BECAB3">0</span><span style="color:#E0E0E0">.</span><span style="color:#BECAB3">0</span><span style="color:#E0E0E0">)</span></div>
<svg style="position:absolute;left:18.0px;top:847px;" width="8" height="14" viewBox="0 0 8 14"><path d="M1 1.2 L6.6 7 L1 12.8 Z" fill="none" stroke="#E6E6E6" stroke-width="1.5" stroke-linejoin="miter"/></svg>
<svg style="position:absolute;left:30.5px;top:844px;" width="22" height="22" viewBox="0 0 22 22"><g fill="none" stroke="#D4D4D4" stroke-width="1.5"><path d="M6.8 1.8 H19 V13.6" opacity="0.8"/><path d="M4.6 4.2 H16.6 V16" opacity="0.92"/></g><rect x="3.5" y="7.6" width="9.6" height="9" fill="none" stroke="#D4D4D4" stroke-width="2.6"/></svg>
<div style="position:absolute;white-space:pre;left:59.5px;top:845.5px;height:21px;line-height:21px;letter-spacing:-0.117px"><span style="color:#E0E0E0">Microsoft.CSharp</span><span style="color:#E0E0E0"> (</span><span style="color:#BECAB3">4</span><span style="color:#E0E0E0">.</span><span style="color:#BECAB3">0</span><span style="color:#E0E0E0">.</span><span style="color:#BECAB3">0</span><span style="color:#E0E0E0">.</span><span style="color:#BECAB3">0</span><span style="color:#E0E0E0">)</span></div>
<svg style="position:absolute;left:18.0px;top:868px;" width="8" height="14" viewBox="0 0 8 14"><path d="M1 1.2 L6.6 7 L1 12.8 Z" fill="none" stroke="#E6E6E6" stroke-width="1.5" stroke-linejoin="miter"/></svg>
<svg style="position:absolute;left:30.5px;top:865px;" width="22" height="22" viewBox="0 0 22 22"><g fill="none" stroke="#D4D4D4" stroke-width="1.5"><path d="M6.8 1.8 H19 V13.6" opacity="0.8"/><path d="M4.6 4.2 H16.6 V16" opacity="0.92"/></g><rect x="3.5" y="7.6" width="9.6" height="9" fill="none" stroke="#D4D4D4" stroke-width="2.6"/></svg>
<div style="position:absolute;white-space:pre;left:59.5px;top:866.5px;height:21px;line-height:21px;letter-spacing:-0.056px"><span style="color:#E0E0E0">mscorlib</span><span style="color:#E0E0E0"> (</span><span style="color:#BECAB3">4</span><span style="color:#E0E0E0">.</span><span style="color:#BECAB3">0</span><span style="color:#E0E0E0">.</span><span style="color:#BECAB3">0</span><span style="color:#E0E0E0">.</span><span style="color:#BECAB3">0</span><span style="color:#E0E0E0">)</span></div>
<div style="position:absolute;left:594px;top:78px;width:91px;height:29px;background:#3F3F46;"></div>
<div style="position:absolute;left:594px;top:106px;width:1318px;height:2px;background:#3F3F46;"></div>
<div style="position:absolute;white-space:pre;left:599.5px;top:82.5px;height:20px;line-height:20px;letter-spacing:0.057px;color:#F1F1F1;">Program</div>
<svg style="position:absolute;left:666.5px;top:87.5px;" width="12" height="10" viewBox="0 0 12 10"><path d="M0.8 0.5 L11.2 9.5 M11.2 0.5 L0.8 9.5" stroke="#6B6B70" stroke-width="1.6" fill="none"/></svg>
<div style="position:absolute;left:594px;top:108px;width:1318px;height:646.5px;background:#1E1E1E;"></div>
<div style="position:absolute;left:594px;top:108px;width:19px;height:646.5px;background:#333337;"></div>
<div style="position:absolute;left:594px;top:108px;width:1297px;height:646.5px;overflow:hidden;">
<div style="position:absolute;left:-594px;top:-108px;width:1920px;height:1032px;" class="code">
<div style="position:absolute;left:678.40px;top:107.00px;width:1.5px;height:653.00px;background:repeating-linear-gradient(to bottom,#505050 0 3.9px,transparent 3.9px 6.9px);"></div>
<div style="position:absolute;left:710.98px;top:107.00px;width:1.5px;height:653.00px;background:repeating-linear-gradient(to bottom,#2F4D4B 0 3.9px,transparent 3.9px 6.9px);"></div>
<div style="position:absolute;left:743.56px;top:107.00px;width:1.5px;height:291.88px;background:repeating-linear-gradient(to bottom,#27394A 0 3.9px,transparent 3.9px 6.9px);"></div>
<div style="position:absolute;left:743.56px;top:481.72px;width:1.5px;height:19.46px;background:repeating-linear-gradient(to bottom,#27394A 0 3.9px,transparent 3.9px 6.9px);"></div>
<div style="position:absolute;left:743.56px;top:584.02px;width:1.5px;height:19.46px;background:repeating-linear-gradient(to bottom,#27394A 0 3.9px,transparent 3.9px 6.9px);"></div>
<div style="position:absolute;left:743.56px;top:686.32px;width:1.5px;height:73.68px;background:repeating-linear-gradient(to bottom,#27394A 0 3.9px,transparent 3.9px 6.9px);"></div>
<div style="position:absolute;left:776.14px;top:238.20px;width:1.5px;height:38.92px;background:repeating-linear-gradient(to bottom,#212E2B 0 3.9px,transparent 3.9px 6.9px);"></div>
<div style="position:absolute;left:776.14px;top:325.86px;width:1.5px;height:38.92px;background:repeating-linear-gradient(to bottom,#212E2B 0 3.9px,transparent 3.9px 6.9px);"></div>
<div style="position:absolute;left:673.5px;top:584.32px;width:1217px;height:19px;background:transparent;border:2px solid #464646;box-sizing:border-box;"></div>
<div style="position:absolute;left:772.04px;top:126.26px;width:261.94px;height:19.46px;background:#48484B;border-radius:2.5px;"></div>
<div style="position:absolute;left:772.54px;top:481.72px;width:439.83px;height:19.46px;background:#883131;"></div>
<div style="position:absolute;left:772.54px;top:584.02px;width:439.83px;height:19.46px;background:#E5D873;"></div>
<div style="position:absolute;left:772.54px;top:686.32px;width:498.84px;height:19.46px;background:#883131;"></div>
<div style="position:absolute;left:674.8px;top:705.78px;width:114.88px;height:14.64px;background:#883131;"></div>
<div style="position:absolute;left:674.8px;top:720.42px;width:172.9px;height:19.46px;background:#883131;"></div>
<div style="position:absolute;left:674.8px;top:739.88px;width:124.17px;height:14.64px;background:#883131;"></div>
<div style="position:absolute;left:772.04px;top:481.72px;width:42.12px;height:19.86px;background:#27498B;box-sizing:border-box;border:1px solid #5C79A8;"></div>
<div style="position:absolute;left:853.49px;top:481.72px;width:42.12px;height:19.86px;background:#27498B;box-sizing:border-box;border:1px solid #5C79A8;"></div>
<div style="position:absolute;left:772.04px;top:584.02px;width:42.12px;height:19.86px;background:#4878A4;box-sizing:border-box;border:1px solid #6E9CC6;"></div>
<div style="position:absolute;left:853.49px;top:584.02px;width:42.12px;height:19.86px;background:#4878A4;box-sizing:border-box;border:1px solid #6E9CC6;"></div>
<div style="position:absolute;left:772.04px;top:686.32px;width:42.12px;height:19.86px;background:#27498B;box-sizing:border-box;border:1px solid #5C79A8;"></div>
<div style="position:absolute;left:853.49px;top:686.32px;width:42.12px;height:19.86px;background:#27498B;box-sizing:border-box;border:1px solid #5C79A8;"></div>
<div style="position:absolute;left:678.40px;top:705.78px;width:1.5px;height:54.22px;background:repeating-linear-gradient(to bottom,rgba(255,255,255,0.10) 0 3.9px,transparent 3.9px 6.9px);"></div>
<div style="position:absolute;left:710.98px;top:705.78px;width:1.5px;height:54.22px;background:repeating-linear-gradient(to bottom,rgba(60,90,90,0.25) 0 3.9px,transparent 3.9px 6.9px);"></div>
<div style="position:absolute;left:743.56px;top:705.78px;width:1.5px;height:54.22px;background:repeating-linear-gradient(to bottom,rgba(30,45,90,0.40) 0 3.9px,transparent 3.9px 6.9px);"></div>
<div style="position:absolute;left:674px;top:617.12px;width:1217px;height:1.1px;background:#A8A8A8;"></div>
<div style="position:absolute;left:674px;top:514.82px;width:1217px;height:1.1px;background:#A8A8A8;"></div>
<div style="position:absolute;left:674px;top:412.52px;width:1217px;height:1.1px;background:#A8A8A8;"></div>
<div class="ln" style="top:107.50px;height:19.46px;line-height:19.46px">13</div>
<div class="cl" style="left:772.54px;top:107.50px;height:19.46px;line-height:19.46px"><span style="color:#4EC9B0">Program</span><span style="color:#DCDCDC">.</span><span style="color:#FF8206">TEST</span><span style="color:#DCDCDC">();</span></div>
<div class="ln" style="top:126.96px;height:19.46px;line-height:19.46px">14</div>
<div class="cl" style="left:772.54px;top:126.96px;height:19.46px;line-height:19.46px"><span style="color:#569CD6">string</span><span style="color:#DCDCDC"> str = </span><span style="color:#D69D85">"you unpacked me!"</span><span style="color:#DCDCDC">;</span></div>
<div class="ln" style="top:146.42px;height:19.46px;line-height:19.46px">15</div>
<div class="cl" style="left:772.54px;top:146.42px;height:19.46px;line-height:19.46px"><span style="color:#569CD6">int</span><span style="color:#DCDCDC"> num = </span><span style="color:#B5CEA8">123</span><span style="color:#DCDCDC">;</span></div>
<div class="ln" style="top:165.88px;height:19.46px;line-height:19.46px">16</div>
<div class="cl" style="left:772.54px;top:165.88px;height:19.46px;line-height:19.46px"><span style="color:#43957F">Console</span><span style="color:#DCDCDC">.</span><span style="color:#FF8206">WriteLine</span><span style="color:#DCDCDC">(</span><span style="color:#D69D85">"UnPackMe console version!"</span><span style="color:#DCDCDC">);</span></div>
<div class="ln" style="top:185.34px;height:19.46px;line-height:19.46px">17</div>
<div class="cl" style="left:772.54px;top:185.34px;height:19.46px;line-height:19.46px"><span style="color:#43957F">Console</span><span style="color:#DCDCDC">.</span><span style="color:#FF8206">WriteLine</span><span style="color:#DCDCDC">(</span><span style="color:#D69D85">"Key:"</span><span style="color:#DCDCDC">);</span></div>
<div class="ln" style="top:204.80px;height:19.46px;line-height:19.46px">18</div>
<div class="cl" style="left:772.54px;top:204.80px;height:19.46px;line-height:19.46px"><span style="color:#569CD6">if</span><span style="color:#DCDCDC"> (</span><span style="color:#43957F">Console</span><span style="color:#DCDCDC">.</span><span style="color:#FF8206">ReadLine</span><span style="color:#DCDCDC">() == </span><span style="color:#D69D85">"2156bvgh"</span><span style="color:#DCDCDC"> + num)</span></div>
<div class="ln" style="top:223.56px;height:14.64px;line-height:14.64px">19</div>
<div class="cl" style="left:772.54px;top:223.56px;height:14.64px;line-height:14.64px"><span style="color:#DCDCDC">{</span></div>
<div class="ln" style="top:238.90px;height:19.46px;line-height:19.46px">20</div>
<div class="cl" style="left:805.12px;top:238.90px;height:19.46px;line-height:19.46px"><span style="color:#43957F">Console</span><span style="color:#DCDCDC">.</span><span style="color:#3CA2A4">ForegroundColor</span><span style="color:#DCDCDC"> = </span><span style="color:#B8D7A3">ConsoleColor</span><span style="color:#DCDCDC">.</span><span style="color:#BD63C5">Green</span><span style="color:#DCDCDC">;</span></div>
<div class="ln" style="top:258.36px;height:19.46px;line-height:19.46px">21</div>
<div class="cl" style="left:805.12px;top:258.36px;height:19.46px;line-height:19.46px"><span style="color:#43957F">Console</span><span style="color:#DCDCDC">.</span><span style="color:#FF8206">WriteLine</span><span style="color:#DCDCDC">(</span><span style="color:#D69D85">"Correct!"</span><span style="color:#DCDCDC"> + str);</span></div>
<div class="ln" style="top:277.12px;height:14.64px;line-height:14.64px">22</div>
<div class="cl" style="left:772.54px;top:277.12px;height:14.64px;line-height:14.64px"><span style="color:#DCDCDC">}</span></div>
<div class="ln" style="top:292.46px;height:19.46px;line-height:19.46px">23</div>
<div class="cl" style="left:772.54px;top:292.46px;height:19.46px;line-height:19.46px"><span style="color:#569CD6">else</span></div>
<div class="ln" style="top:311.22px;height:14.64px;line-height:14.64px">24</div>
<div class="cl" style="left:772.54px;top:311.22px;height:14.64px;line-height:14.64px"><span style="color:#DCDCDC">{</span></div>
<div class="ln" style="top:326.56px;height:19.46px;line-height:19.46px">25</div>
<div class="cl" style="left:805.12px;top:326.56px;height:19.46px;line-height:19.46px"><span style="color:#43957F">Console</span><span style="color:#DCDCDC">.</span><span style="color:#3CA2A4">ForegroundColor</span><span style="color:#DCDCDC"> = </span><span style="color:#B8D7A3">ConsoleColor</span><span style="color:#DCDCDC">.</span><span style="color:#BD63C5">Red</span><span style="color:#DCDCDC">;</span></div>
<div class="ln" style="top:346.02px;height:19.46px;line-height:19.46px">26</div>
<div class="cl" style="left:805.12px;top:346.02px;height:19.46px;line-height:19.46px"><span style="color:#43957F">Console</span><span style="color:#DCDCDC">.</span><span style="color:#FF8206">WriteLine</span><span style="color:#DCDCDC">(</span><span style="color:#D69D85">"Incorrect!"</span><span style="color:#DCDCDC">);</span></div>
<div class="ln" style="top:364.78px;height:14.64px;line-height:14.64px">27</div>
<div class="cl" style="left:772.54px;top:364.78px;height:14.64px;line-height:14.64px"><span style="color:#DCDCDC">}</span></div>
<div class="ln" style="top:380.12px;height:19.46px;line-height:19.46px">28</div>
<div class="cl" style="left:772.54px;top:380.12px;height:19.46px;line-height:19.46px"><span style="color:#43957F">Console</span><span style="color:#DCDCDC">.</span><span style="color:#FF8206">ReadKey</span><span style="color:#DCDCDC">();</span></div>
<div class="ln" style="top:398.88px;height:14.64px;line-height:14.64px">29</div>
<div class="cl" style="left:739.96px;top:398.88px;height:14.64px;line-height:14.64px"><span style="color:#DCDCDC">}</span></div>
<div class="ln" style="top:413.52px;height:14.64px;line-height:14.64px">30</div>
<div class="ln" style="top:428.86px;height:19.46px;line-height:19.46px">31</div>
<div class="cl" style="left:739.96px;top:428.86px;height:19.46px;line-height:19.46px"><span style="color:#57A64A">// Token: 0x06000003 RID: 3 RVA: 0x00002052 File Offset: 0x00000252</span></div>
<div class="ln" style="top:448.32px;height:19.46px;line-height:19.46px">32</div>
<div class="cl" style="left:739.96px;top:448.32px;height:19.46px;line-height:19.46px"><span style="color:#569CD6">private static void</span><span style="color:#DCDCDC"> </span><span style="color:#FF8206">Method</span><span style="color:#DCDCDC">()</span></div>
<div class="ln" style="top:467.08px;height:14.64px;line-height:14.64px">33</div>
<div class="cl" style="left:739.96px;top:467.08px;height:14.64px;line-height:14.64px"><span style="color:#DCDCDC">{</span></div>
<div class="ln" style="top:482.42px;height:19.46px;line-height:19.46px">34</div>
<div class="cl" style="left:772.54px;top:482.42px;height:19.46px;line-height:19.46px"><span style="color:#FFFFFF">Entry</span><span style="color:#FFFFFF">.Run&lt;</span><span style="color:#FFFFFF">Entry</span><span style="color:#FFFFFF">&gt;(</span><span style="color:#FFFFFF">typeof</span><span style="color:#FFFFFF">(</span><span style="color:#FFFFFF">Program</span><span style="color:#FFFFFF">).TypeHandle, </span><span style="color:#FFFFFF">0</span><span style="color:#FFFFFF">, </span><span style="color:#FFFFFF">null</span><span style="color:#FFFFFF">);</span></div>
<div class="ln" style="top:501.18px;height:14.64px;line-height:14.64px">35</div>
<div class="cl" style="left:739.96px;top:501.18px;height:14.64px;line-height:14.64px"><span style="color:#DCDCDC">}</span></div>
<div class="ln" style="top:515.82px;height:14.64px;line-height:14.64px">36</div>
<div class="ln" style="top:531.16px;height:19.46px;line-height:19.46px">37</div>
<div class="cl" style="left:739.96px;top:531.16px;height:19.46px;line-height:19.46px"><span style="color:#57A64A">// Token: 0x06000004 RID: 4 RVA: 0x00002061 File Offset: 0x00000261</span></div>
<div class="ln" style="top:550.62px;height:19.46px;line-height:19.46px">38</div>
<div class="cl" style="left:739.96px;top:550.62px;height:19.46px;line-height:19.46px"><span style="color:#569CD6">public static void</span><span style="color:#DCDCDC"> </span><span style="color:#FF8206">TEST</span><span style="color:#DCDCDC">()</span></div>
<div class="ln" style="top:569.38px;height:14.64px;line-height:14.64px">39</div>
<div class="cl" style="left:739.96px;top:569.38px;height:14.64px;line-height:14.64px"><span style="color:#DCDCDC">{</span></div>
<div class="ln" style="top:584.72px;height:19.46px;line-height:19.46px">40</div>
<div class="cl" style="left:772.54px;top:584.72px;height:19.46px;line-height:19.46px"><span style="color:#1C3350">Entry</span><span style="color:#1A1A1A">.Run&lt;</span><span style="color:#1C3350">Entry</span><span style="color:#1A1A1A">&gt;(</span><span style="color:#1A1A1A">typeof</span><span style="color:#1A1A1A">(</span><span style="color:#1A1A1A">Program</span><span style="color:#1A1A1A">).TypeHandle, </span><span style="color:#1A1A1A">1</span><span style="color:#1A1A1A">, </span><span style="color:#1A1A1A">null</span><span style="color:#1A1A1A">);</span></div>
<div class="ln" style="top:603.48px;height:14.64px;line-height:14.64px">41</div>
<div class="cl" style="left:739.96px;top:603.48px;height:14.64px;line-height:14.64px"><span style="color:#DCDCDC">}</span></div>
<div class="ln" style="top:618.12px;height:14.64px;line-height:14.64px">42</div>
<div class="ln" style="top:633.46px;height:19.46px;line-height:19.46px">43</div>
<div class="cl" style="left:739.96px;top:633.46px;height:19.46px;line-height:19.46px"><span style="color:#57A64A">// Token: 0x06000005 RID: 5 RVA: 0x00002070 File Offset: 0x00000270</span></div>
<div class="ln" style="top:652.92px;height:19.46px;line-height:19.46px">44</div>
<div class="cl" style="left:739.96px;top:652.92px;height:19.46px;line-height:19.46px"><span style="color:#569CD6">public</span><span style="color:#DCDCDC"> </span><span style="color:#4EC9B0">Program</span><span style="color:#DCDCDC">()</span></div>
<div class="ln" style="top:671.68px;height:14.64px;line-height:14.64px">45</div>
<div class="cl" style="left:739.96px;top:671.68px;height:14.64px;line-height:14.64px"><span style="color:#DCDCDC">{</span></div>
<div class="ln" style="top:687.02px;height:19.46px;line-height:19.46px">46</div>
<div class="cl" style="left:772.54px;top:687.02px;height:19.46px;line-height:19.46px"><span style="color:#FFFFFF">Entry</span><span style="color:#FFFFFF">.Run&lt;</span><span style="color:#FFFFFF">Entry</span><span style="color:#FFFFFF">&gt;(</span><span style="color:#FFFFFF">typeof</span><span style="color:#FFFFFF">(</span><span style="color:#FFFFFF">Program</span><span style="color:#FFFFFF">).TypeHandle, </span><span style="color:#FFFFFF">2</span><span style="color:#FFFFFF">, </span><span style="color:#FFFFFF">new</span><span style="color:#FFFFFF"> </span><span style="color:#FFFFFF">object</span><span style="color:#FFFFFF">[]</span></div>
<div class="ln" style="top:705.78px;height:14.64px;line-height:14.64px">47</div>
<div class="cl" style="left:772.54px;top:705.78px;height:14.64px;line-height:14.64px"><span style="color:#DCDCDC">{</span></div>
<div class="ln" style="top:721.12px;height:19.46px;line-height:19.46px">48</div>
<div class="cl" style="left:805.12px;top:721.12px;height:19.46px;line-height:19.46px"><span style="color:#FFFFFF">this</span></div>
<div class="ln" style="top:739.88px;height:14.64px;line-height:14.64px">49</div>
<div class="cl" style="left:772.54px;top:739.88px;height:14.64px;line-height:14.64px"><span style="color:#DCDCDC">});</span></div>
</div></div>
<svg style="position:absolute;left:596px;top:483.12px;" width="16" height="16" viewBox="0 0 16 16"><circle cx="8" cy="8" r="6.9" fill="#F4524A"/></svg>
<svg style="position:absolute;left:596px;top:586.42px;" width="16" height="16" viewBox="0 0 16 16"><circle cx="8.4" cy="8" r="6.7" fill="#EE6A4C" stroke="#9E2A1C" stroke-width="0.9"/><path d="M2.2 4.6 H8.6 V2.6 L14.4 8 L8.6 13.4 V11.4 H2.2 Z" fill="#FFC9A0"/><path d="M3 5.4 H9.2 V4.2 L13.2 8 L9.2 11.8 V10.6 H3 Z" fill="#FFD42E"/></svg>
<svg style="position:absolute;left:596px;top:687.72px;" width="16" height="16" viewBox="0 0 16 16"><circle cx="8" cy="8" r="6.9" fill="#F4524A"/></svg>
<div style="position:absolute;left:1891px;top:108px;width:21px;height:646.5px;background:#3E3E42;"></div>
<svg style="position:absolute;left:1896px;top:115.7px;" width="11.4" height="6.4" viewBox="0 0 12 6.5"><path d="M6 0 L12 6.5 H0 Z" fill="#999999"/></svg>
<svg style="position:absolute;left:1896px;top:741.8px;" width="11.4" height="6.4" viewBox="0 0 12 6.5"><path d="M0 0 H12 L6 6.5 Z" fill="#999999"/></svg>
<div style="position:absolute;left:1896.3px;top:212px;width:10.5px;height:244.7px;background:#686868;"></div>
<div style="position:absolute;left:594px;top:754.5px;width:1318px;height:21.5px;background:#3E3E42;"></div>
<div style="position:absolute;left:594px;top:755px;width:74.5px;height:20.8px;background:#262627;box-sizing:border-box;border:1px solid #46464A;"></div>
<div style="position:absolute;left:653px;top:756px;width:1px;height:19px;background:#46464A;"></div>
<div style="position:absolute;white-space:pre;left:599px;top:755.5px;height:20px;line-height:20px;letter-spacing:-0.012px;color:#F1F1F1;">91 %</div>
<svg style="position:absolute;left:657px;top:763.5px;" width="8" height="4" viewBox="0 0 8 4"><path d="M0 0 H8 L4 4 Z" fill="#C8C8C8"/></svg>
<svg style="position:absolute;left:677px;top:760px;" width="6" height="11" viewBox="0 0 6 11"><path d="M6 0 V11 L0 5.5 Z" fill="#555558"/></svg>
<svg style="position:absolute;left:1878px;top:760px;" width="6" height="11" viewBox="0 0 6 11"><path d="M0 0 V11 L6 5.5 Z" fill="#555558"/></svg>
<div style="position:absolute;left:594.5px;top:785px;width:1316.5px;height:181px;background:#252526;box-sizing:border-box;border:1px solid #3F3F46;"></div>
<div style="position:absolute;left:594.5px;top:784.7px;width:1316.5px;height:28px;background:#007ACC;"></div>
<div style="position:absolute;white-space:pre;left:600.5px;top:789.5px;height:20px;line-height:20px;letter-spacing:0.242px;color:#FFFFFF;">Modules</div>
<div style="position:absolute;left:669px;top:794.5px;width:1196px;height:10px;background:transparent;background-image:radial-gradient(circle,#2489D6 0.9px,transparent 1.15px),radial-gradient(circle,#2489D6 0.9px,transparent 1.15px);background-size:5px 5px,5px 5px;background-position:0 0,2.5px 2.5px;"></div>
<svg style="position:absolute;left:1874.5px;top:795px;" width="9" height="4.5" viewBox="0 0 9 4.5"><path d="M0 0 H9 L4.5 4.5 Z" fill="#FFFFFF"/></svg>
<svg style="position:absolute;left:1893px;top:793.3px;" width="11" height="10" viewBox="0 0 11 10"><path d="M0.8 0.5 L10.2 9.5 M10.2 0.5 L0.8 9.5" stroke="#FFFFFF" stroke-width="1.8" fill="none"/></svg>
<div style="position:absolute;left:595px;top:813px;width:1315px;height:40px;background:#2D2D30;"></div>
<div style="position:absolute;white-space:pre;left:601.5px;top:824.2px;height:20px;line-height:20px;letter-spacing:-0.633px;color:#E4E4E4;">Processus</div>
<div style="position:absolute;left:671px;top:821px;width:188px;height:25px;background:#28282B;box-sizing:border-box;border:1px solid #434346;"></div>
<div style="position:absolute;left:843px;top:822px;width:1px;height:23px;background:#434346;"></div>
<svg style="position:absolute;left:847.5px;top:832px;" width="7" height="3.5" viewBox="0 0 7 3.5"><path d="M0 0 H7 L3.5 3.5 Z" fill="#9A9A9E"/></svg>
<div style="position:absolute;white-space:pre;left:673.5px;top:824.2px;height:20px;line-height:20px;letter-spacing:0.273px;color:#E4E4E4;">Tout</div>
<div style="position:absolute;left:863px;top:821px;width:1px;height:26px;background:#46464A;"></div>
<div style="position:absolute;left:901px;top:821px;width:1px;height:26px;background:#46464A;"></div>
<svg style="position:absolute;left:875px;top:822.5px;" width="18" height="20" viewBox="0 0 18 20"><rect x="7" y="2.2" width="10.4" height="2.2" fill="#C8C8C8"/><rect x="2" y="7.4" width="15.4" height="2.4" fill="#C8C8C8"/><rect x="2" y="12" width="15.4" height="2.4" fill="#C8C8C8"/><rect x="2" y="16.6" width="15.4" height="2.4" fill="#C8C8C8"/><path d="M0.8 0.8 L7.4 7.4 M7.4 0.8 L0.8 7.4" stroke="#E8584C" stroke-width="1.4"/></svg>
<div style="position:absolute;white-space:pre;left:913.5px;top:824.2px;height:20px;line-height:20px;letter-spacing:-0.236px;color:#E4E4E4;">Recherche</div>
<div style="position:absolute;left:993px;top:822px;width:888px;height:21.5px;background:#313134;box-sizing:border-box;border:1px solid #434346;"></div>
<svg style="position:absolute;left:1888px;top:824.5px;" width="17" height="17" viewBox="0 0 17 17"><circle cx="8.5" cy="8.5" r="8.3" fill="#1BA1E2"/><path d="M5.6 6.4 C5.6 2.6 11.6 2.8 11.4 6.2 C11.3 8.2 8.6 8 8.6 10.4" stroke="#1E1E1E" stroke-width="2.2" fill="none"/><rect x="7.5" y="11.8" width="2.3" height="2.3" fill="#1E1E1E"/></svg>
<div style="position:absolute;left:595px;top:853px;width:1295px;height:25px;background:#252526;border-top:1px solid #3F3F46;border-bottom:1px solid #3F3F46;box-sizing:border-box;"></div>
<div style="position:absolute;left:615.6px;top:854px;width:1px;height:23px;background:#3F3F46;"></div>
<div style="position:absolute;left:773px;top:854px;width:1px;height:23px;background:#3F3F46;"></div>
<div style="position:absolute;left:848.5px;top:854px;width:1px;height:23px;background:#3F3F46;"></div>
<div style="position:absolute;left:921px;top:854px;width:1px;height:23px;background:#3F3F46;"></div>
<div style="position:absolute;left:1003.5px;top:854px;width:1px;height:23px;background:#3F3F46;"></div>
<div style="position:absolute;left:1056.5px;top:854px;width:1px;height:23px;background:#3F3F46;"></div>
<div style="position:absolute;left:1320.5px;top:854px;width:1px;height:23px;background:#3F3F46;"></div>
<div style="position:absolute;left:1469px;top:854px;width:1px;height:23px;background:#3F3F46;"></div>
<div style="position:absolute;left:1624.5px;top:854px;width:1px;height:23px;background:#3F3F46;"></div>
<div style="position:absolute;left:1768px;top:854px;width:1px;height:23px;background:#3F3F46;"></div>
<div style="position:absolute;left:1872px;top:854px;width:1px;height:23px;background:#3F3F46;"></div>
<div style="position:absolute;left:595px;top:853px;width:1295px;height:91px;overflow:hidden"><div style="position:absolute;left:-595px;top:-853px">
<div style="position:absolute;white-space:pre;left:625.2px;top:856.2px;height:20px;line-height:20px;letter-spacing:0.962px;color:#E4E4E4;">Nom</div>
<div style="position:absolute;white-space:pre;left:781.8px;top:856.2px;height:20px;line-height:20px;letter-spacing:0.349px;color:#E4E4E4;">Optimisé</div>
<div style="position:absolute;white-space:pre;left:857.5px;top:856.2px;height:20px;line-height:20px;letter-spacing:0.157px;color:#E4E4E4;">Dynamic</div>
<div style="position:absolute;white-space:pre;left:929.6px;top:856.2px;height:20px;line-height:20px;letter-spacing:0.443px;color:#E4E4E4;">InMemory</div>
<div style="position:absolute;white-space:pre;left:1012px;top:856.2px;height:20px;line-height:20px;letter-spacing:0.187px;color:#E4E4E4;">Ordre</div>
<div style="position:absolute;white-space:pre;left:1065px;top:856.2px;height:20px;line-height:20px;letter-spacing:-0.052px;color:#E4E4E4;">Version</div>
<div style="position:absolute;white-space:pre;left:1329.6px;top:856.2px;height:20px;line-height:20px;letter-spacing:0.472px;color:#E4E4E4;">Horodatage</div>
<div style="position:absolute;white-space:pre;left:1477.8px;top:856.2px;height:20px;line-height:20px;letter-spacing:-0.171px;color:#E4E4E4;">Adresse</div>
<div style="position:absolute;white-space:pre;left:1633px;top:856.2px;height:20px;line-height:20px;letter-spacing:-0.522px;color:#E4E4E4;">Processus</div>
<div style="position:absolute;white-space:pre;left:1777px;top:856.2px;height:20px;line-height:20px;letter-spacing:0.581px;color:#E4E4E4;">AppDomain</div>
<div style="position:absolute;white-space:pre;left:1880.8px;top:856.2px;height:20px;line-height:20px;letter-spacing:-2.972px;color:#E4E4E4;">R</div>
<svg style="position:absolute;left:596.5px;top:880.1px;" width="22" height="22" viewBox="0 0 22 22"><rect x="1.4" y="4" width="5.4" height="4.6" fill="#B785DC"/><rect x="8.7" y="4" width="5.4" height="4.6" fill="#B785DC"/><rect x="1.4" y="10" width="12.7" height="4.8" fill="#B785DC"/></svg>
<div style="position:absolute;white-space:pre;left:625.2px;top:878.5px;height:25px;line-height:25px;letter-spacing:0.315px"><span style="color:#4F8FCF">mscorlib</span><span style="color:#A6A690">.dll</span></div>
<div style="position:absolute;white-space:pre;left:781.2px;top:878.5px;height:25px;line-height:25px;letter-spacing:0.4px"><span style="color:#E4E4E4">Non</span></div>
<div style="position:absolute;white-space:pre;left:857.6px;top:878.5px;height:25px;line-height:25px;letter-spacing:0.4px"><span style="color:#E4E4E4">Non</span></div>
<div style="position:absolute;white-space:pre;left:929.4px;top:878.5px;height:25px;line-height:25px;letter-spacing:0.4px"><span style="color:#E4E4E4">Non</span></div>
<div style="position:absolute;white-space:pre;left:1040.7px;top:878.5px;height:25px;line-height:25px;letter-spacing:-1.564px"><span style="color:#D8D8D8">1</span></div>
<div style="position:absolute;white-space:pre;left:1065px;top:878.5px;height:25px;line-height:25px;letter-spacing:-0.36px"><span style="color:#E4E4E4">4.8.4180.0 built by: NET48REL1LAST_B</span></div>
<div style="position:absolute;white-space:pre;left:1329.8px;top:878.5px;height:25px;line-height:25px;letter-spacing:0.008px"><span style="color:#E4E4E4">26/03/2020 22:26:58</span></div>
<div style="position:absolute;white-space:pre;left:1476.8px;top:878.5px;height:25px;line-height:25px;letter-spacing:-0.005px"><span style="color:#B5CEA8">05D40000-062AC000</span></div>
<div style="position:absolute;white-space:pre;left:1633px;top:878.5px;height:25px;line-height:25px;letter-spacing:0.015px"><span style="color:#E4E4E4">[0x46B0] </span><span style="color:#4F8FCF">Target</span><span style="color:#A6A690">.exe</span></div>
<div style="position:absolute;white-space:pre;left:1777.4px;top:878.5px;height:25px;line-height:25px;letter-spacing:0.072px"><span style="color:#E4E4E4">[1] </span><span style="color:#4F8FCF">Target</span><span style="color:#A6A690">.exe</span></div>
<div style="position:absolute;white-space:pre;left:1881.2px;top:878.5px;height:25px;line-height:25px;letter-spacing:-1.472px"><span style="color:#E4E4E4">C</span></div>
<svg style="position:absolute;left:595.7px;top:904.5px;" width="22" height="22" viewBox="0 0 22 22"><g fill="none" stroke="#EACB86" stroke-width="1.5"><path d="M6.8 1.8 H19 V13.6" opacity="0.8"/><path d="M4.6 4.2 H16.6 V16" opacity="0.92"/></g><rect x="3.5" y="7.6" width="9.6" height="9" fill="none" stroke="#EACB86" stroke-width="2.6"/></svg>
<div style="position:absolute;white-space:pre;left:625.2px;top:903.5px;height:25px;line-height:25px;letter-spacing:-0.111px"><span style="color:#4F8FCF">Target</span><span style="color:#A6A690">.exe</span></div>
<div style="position:absolute;white-space:pre;left:781.2px;top:903.5px;height:25px;line-height:25px;letter-spacing:0.4px"><span style="color:#E4E4E4">Non</span></div>
<div style="position:absolute;white-space:pre;left:857.6px;top:903.5px;height:25px;line-height:25px;letter-spacing:0.4px"><span style="color:#E4E4E4">Non</span></div>
<div style="position:absolute;white-space:pre;left:929.4px;top:903.5px;height:25px;line-height:25px;letter-spacing:0.4px"><span style="color:#E4E4E4">Non</span></div>
<div style="position:absolute;white-space:pre;left:1040.7px;top:903.5px;height:25px;line-height:25px;letter-spacing:-1.564px"><span style="color:#D8D8D8">2</span></div>
<div style="position:absolute;white-space:pre;left:1065px;top:903.5px;height:25px;line-height:25px;letter-spacing:-0.335px"><span style="color:#E4E4E4">1.0.0.0</span></div>
<div style="position:absolute;white-space:pre;left:1329.8px;top:903.5px;height:25px;line-height:25px;letter-spacing:0.129px"><span style="color:#F0262A">&lt;Inconnu&gt;</span></div>
<div style="position:absolute;white-space:pre;left:1476.8px;top:903.5px;height:25px;line-height:25px;letter-spacing:0.09px"><span style="color:#B5CEA8">00D60000-00D68000</span></div>
<div style="position:absolute;white-space:pre;left:1633px;top:903.5px;height:25px;line-height:25px;letter-spacing:0.015px"><span style="color:#E4E4E4">[0x46B0] </span><span style="color:#4F8FCF">Target</span><span style="color:#A6A690">.exe</span></div>
<div style="position:absolute;white-space:pre;left:1777.4px;top:903.5px;height:25px;line-height:25px;letter-spacing:0.072px"><span style="color:#E4E4E4">[1] </span><span style="color:#4F8FCF">Target</span><span style="color:#A6A690">.exe</span></div>
<div style="position:absolute;white-space:pre;left:1881.2px;top:903.5px;height:25px;line-height:25px;letter-spacing:-1.472px"><span style="color:#E4E4E4">D</span></div>
<svg style="position:absolute;left:596.5px;top:930.1px;" width="22" height="22" viewBox="0 0 22 22"><rect x="1.4" y="4" width="5.4" height="4.6" fill="#B785DC"/><rect x="8.7" y="4" width="5.4" height="4.6" fill="#B785DC"/><rect x="1.4" y="10" width="12.7" height="4.8" fill="#B785DC"/></svg>
<div style="position:absolute;white-space:pre;left:625.2px;top:928.5px;height:25px;line-height:25px;letter-spacing:0.161px"><span style="color:#4F8FCF">MemeVM.Runtime</span><span style="color:#A6A690">.dll</span></div>
<div style="position:absolute;white-space:pre;left:781.2px;top:928.5px;height:25px;line-height:25px;letter-spacing:0.4px"><span style="color:#E4E4E4">Non</span></div>
<div style="position:absolute;white-space:pre;left:857.6px;top:928.5px;height:25px;line-height:25px;letter-spacing:0.4px"><span style="color:#E4E4E4">Non</span></div>
<div style="position:absolute;white-space:pre;left:929.4px;top:928.5px;height:25px;line-height:25px;letter-spacing:0.4px"><span style="color:#E4E4E4">Non</span></div>
<div style="position:absolute;white-space:pre;left:1040.7px;top:928.5px;height:25px;line-height:25px;letter-spacing:-1.564px"><span style="color:#D8D8D8">3</span></div>
<div style="position:absolute;white-space:pre;left:1065px;top:928.5px;height:25px;line-height:25px;letter-spacing:-0.335px"><span style="color:#E4E4E4">1.0.0.0</span></div>
<div style="position:absolute;white-space:pre;left:1329.8px;top:928.5px;height:25px;line-height:25px;letter-spacing:0.129px"><span style="color:#F0262A">&lt;Inconnu&gt;</span></div>
<div style="position:absolute;white-space:pre;left:1476.8px;top:928.5px;height:25px;line-height:25px;letter-spacing:0.043px"><span style="color:#B5CEA8">05920000-0592A000</span></div>
<div style="position:absolute;white-space:pre;left:1633px;top:928.5px;height:25px;line-height:25px;letter-spacing:0.015px"><span style="color:#E4E4E4">[0x46B0] </span><span style="color:#4F8FCF">Target</span><span style="color:#A6A690">.exe</span></div>
<div style="position:absolute;white-space:pre;left:1777.4px;top:928.5px;height:25px;line-height:25px;letter-spacing:0.072px"><span style="color:#E4E4E4">[1] </span><span style="color:#4F8FCF">Target</span><span style="color:#A6A690">.exe</span></div>
<div style="position:absolute;white-space:pre;left:1881.2px;top:928.5px;height:25px;line-height:25px;letter-spacing:-1.472px"><span style="color:#E4E4E4">D</span></div>
</div></div>
<div style="position:absolute;left:1890px;top:853px;width:21px;height:91px;background:#3E3E42;"></div>
<svg style="position:absolute;left:1895.5px;top:861px;" width="11" height="6.5" viewBox="0 0 11 6.5"><path d="M5.5 0 L11 6.5 H0 Z" fill="#999999"/></svg>
<svg style="position:absolute;left:1895.5px;top:930.5px;" width="11" height="6.5" viewBox="0 0 11 6.5"><path d="M0 0 H11 L5.5 6.5 Z" fill="#999999"/></svg>
<div style="position:absolute;left:1895.5px;top:873.5px;width:10.5px;height:20px;background:#686868;"></div>
<div style="position:absolute;left:595px;top:944px;width:1315px;height:21.5px;background:#3E3E42;"></div>
<svg style="position:absolute;left:602.5px;top:950.2px;" width="7" height="9.5" viewBox="0 0 7 9.5"><path d="M7 0 V9.5 L0 4.75 Z" fill="#999999"/></svg>
<svg style="position:absolute;left:1877px;top:950.2px;" width="7" height="9.5" viewBox="0 0 7 9.5"><path d="M0 0 V9.5 L7 4.75 Z" fill="#999999"/></svg>
<div style="position:absolute;left:616px;top:949.2px;width:801px;height:10.6px;background:#686868;"></div>
<div style="position:absolute;white-space:pre;left:600.5px;top:970px;height:20px;line-height:20px;letter-spacing:-0.211px;color:#E4E4E4;">Locales</div>
<div style="position:absolute;left:656.5px;top:965px;width:71px;height:27.5px;background:#2A2A2C;box-sizing:border-box;border:1px solid #3F3F46;border-top:none;"></div>
<div style="position:absolute;white-space:pre;left:663.5px;top:969px;height:20px;line-height:20px;letter-spacing:0.242px;color:#1C8FE0;">Modules</div>
<div style="position:absolute;left:0px;top:999.5px;width:1920px;height:29.5px;background:#141822;"></div>
<div style="position:absolute;left:2px;top:1000px;width:1916px;height:28.4px;background:#CA5100;"></div>
<div style="position:absolute;white-space:pre;left:6px;top:1004.5px;height:20px;line-height:20px;letter-spacing:0.069px;color:#FFFFFF;">Point d’arrêt #2 : pid=18096(Target.exe), Target.exe</div>
<div style="position:absolute;left:0px;top:1028.4px;width:1920px;height:1px;background:#1B1B1C;"></div>
<div style="position:absolute;left:0px;top:1029.4px;width:1920px;height:3px;background:#F4F4F4;"></div>
<div style="position:absolute;left:0px;top:1029.4px;width:60px;height:3px;background:#E4E4E4;"></div>
</body></html>
